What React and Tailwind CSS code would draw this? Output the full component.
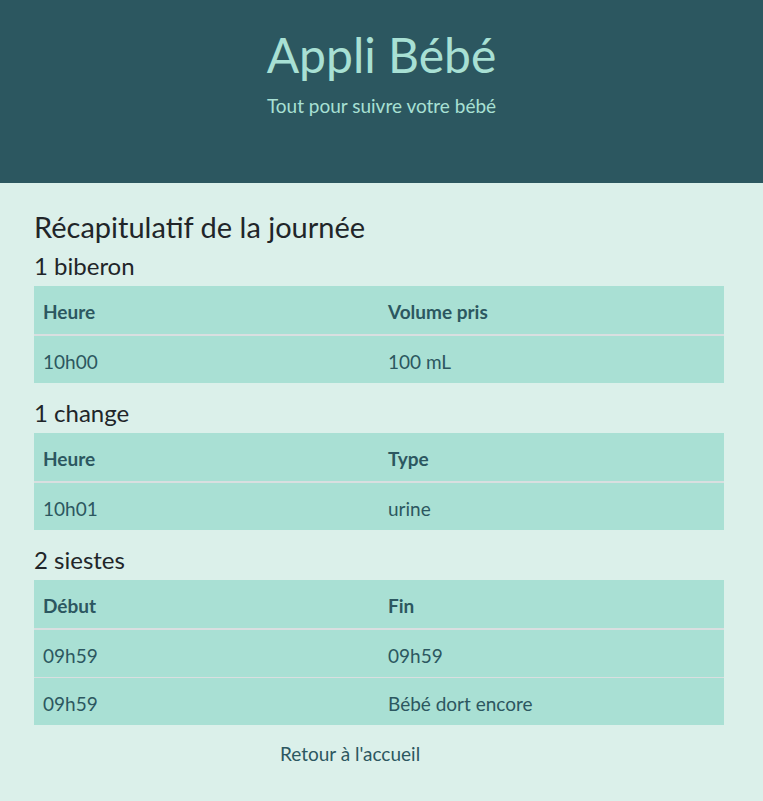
import React from 'react';

const sections = [
  { title: '1 biberon', cols: ['Heure', 'Volume pris'], rows: [['10h00', '100 mL']] },
  { title: '1 change', cols: ['Heure', 'Type'], rows: [['10h01', 'urine']] },
  { title: '2 siestes', cols: ['Début', 'Fin'], rows: [['09h59', '09h59'], ['09h59', 'Bébé dort encore']] },
];

const SummaryTable = ({ cols, rows }) => (
  <table className="w-full table-fixed border-collapse bg-[#a9e0d4] text-[#2c5760] text-[19px] mb-[15px]">
    <thead>
      <tr>
        {cols.map((c) => (
          <th key={c} className="text-left font-bold leading-[28px] px-[9px] pt-[12px] pb-[8px] border-b-2 border-[#d9dfe0]">{c}</th>
        ))}
      </tr>
    </thead>
    <tbody>
      {rows.map((r, i) => (
        <tr key={i} className={i > 0 ? 'border-t border-[#d9dfe0]' : ''}>
          {r.map((cell, j) => (
            <td key={j} className="leading-[27px] px-[9px] pt-[12px] pb-[8px]">{cell}</td>
          ))}
        </tr>
      ))}
    </tbody>
  </table>
);

export default function App() {
  return (
    <div className="min-h-[801px] bg-[#dbf0ea] font-['Lato',sans-serif]">
      <header className="bg-[#2c5760] h-[183px] pt-[26px] text-center text-[#a8e0d4]">
        <h1 className="text-[48px] leading-[58px] font-normal">Appli Bébé</h1>
        <p className="text-[19px] leading-[27px] mt-[8px]">Tout pour suivre votre bébé</p>
      </header>

      <main className="ml-[34px] w-[690px] pt-[26px] pb-[20px] text-[#212529]">
        <h2 className="text-[29px] leading-[35px] mb-[7px]">Récapitulatif de la journée</h2>
        {sections.map((s) => (
          <section key={s.title}>
            <h3 className="text-[24px] leading-[29px] mb-[6px]">{s.title}</h3>
            <SummaryTable cols={s.cols} rows={s.rows} />
          </section>
        ))}
        <div className="w-[632px] text-center mt-[15px] text-[19px] leading-[27px] text-[#2c5760]">
          <a href="#">Retour à l'accueil</a>
        </div>
      </main>
    </div>
  );
}
